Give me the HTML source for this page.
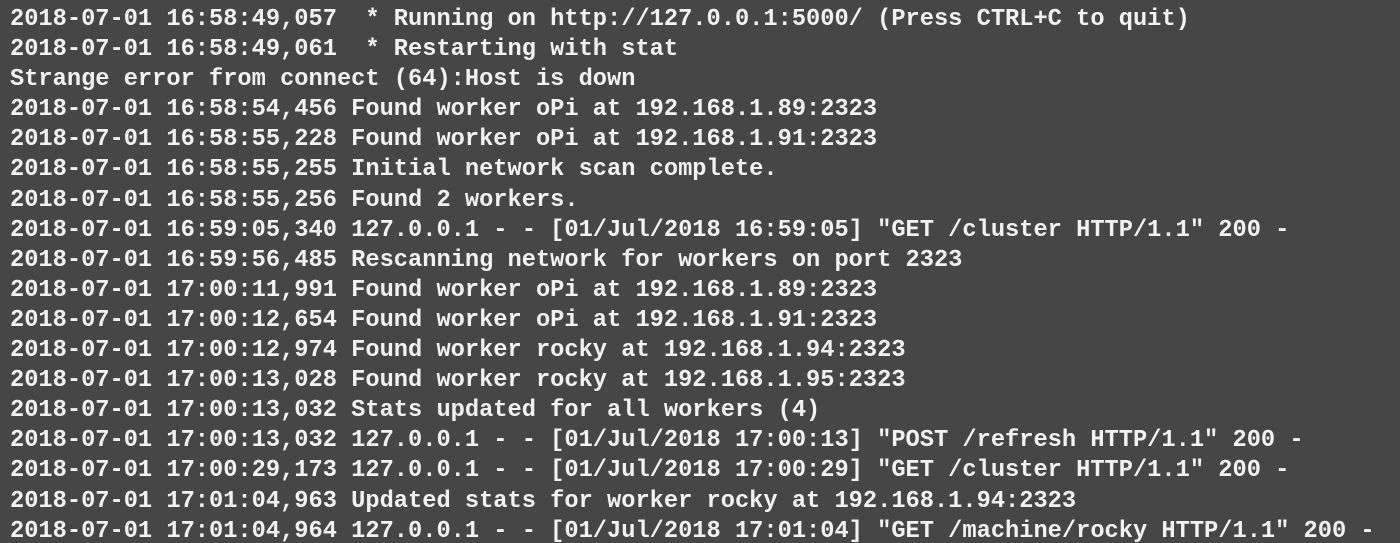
<!DOCTYPE html>
<html><head><style>
html,body{margin:0;padding:0;width:1400px;height:543px;overflow:hidden;background:#464646;}
pre{margin:0;padding:5px 0 0 10px;font-family:"Liberation Mono",monospace;font-size:23.7px;line-height:30.1px;color:#f2f2f2;font-weight:bold;white-space:pre;}
</style></head><body><pre>2018-07-01 16:58:49,057  * Running on http://127.0.0.1:5000/ (Press CTRL+C to quit)
2018-07-01 16:58:49,061  * Restarting with stat
Strange error from connect (64):Host is down
2018-07-01 16:58:54,456 Found worker oPi at 192.168.1.89:2323
2018-07-01 16:58:55,228 Found worker oPi at 192.168.1.91:2323
2018-07-01 16:58:55,255 Initial network scan complete.
2018-07-01 16:58:55,256 Found 2 workers.
2018-07-01 16:59:05,340 127.0.0.1 - - [01/Jul/2018 16:59:05] "GET /cluster HTTP/1.1" 200 -
2018-07-01 16:59:56,485 Rescanning network for workers on port 2323
2018-07-01 17:00:11,991 Found worker oPi at 192.168.1.89:2323
2018-07-01 17:00:12,654 Found worker oPi at 192.168.1.91:2323
2018-07-01 17:00:12,974 Found worker rocky at 192.168.1.94:2323
2018-07-01 17:00:13,028 Found worker rocky at 192.168.1.95:2323
2018-07-01 17:00:13,032 Stats updated for all workers (4)
2018-07-01 17:00:13,032 127.0.0.1 - - [01/Jul/2018 17:00:13] "POST /refresh HTTP/1.1" 200 -
2018-07-01 17:00:29,173 127.0.0.1 - - [01/Jul/2018 17:00:29] "GET /cluster HTTP/1.1" 200 -
2018-07-01 17:01:04,963 Updated stats for worker rocky at 192.168.1.94:2323
2018-07-01 17:01:04,964 127.0.0.1 - - [01/Jul/2018 17:01:04] "GET /machine/rocky HTTP/1.1" 200 -</pre></body></html>
